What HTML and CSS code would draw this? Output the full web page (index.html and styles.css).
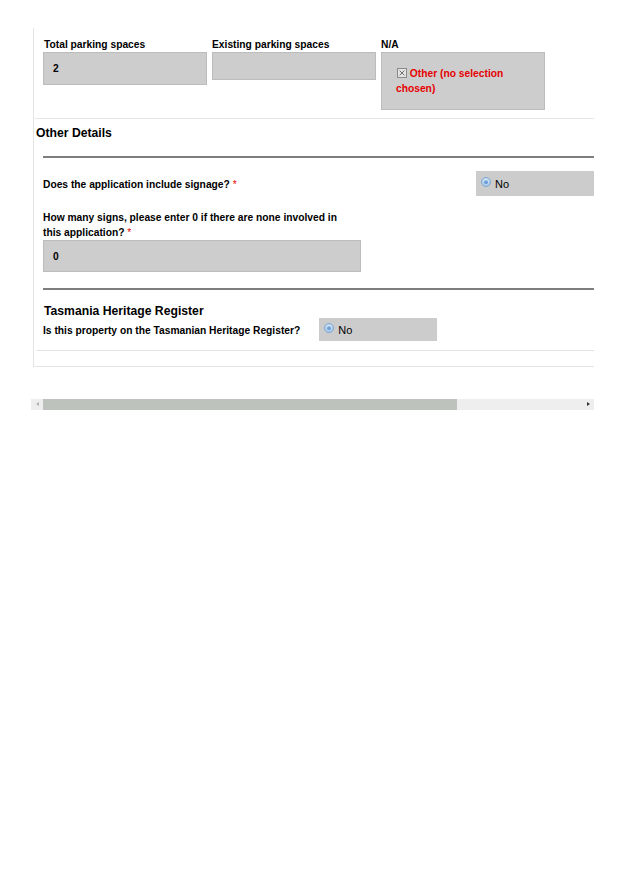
FILE: index.html
```html
<!DOCTYPE html>
<html>
<head>
<meta charset="utf-8">
<link rel="stylesheet" href="styles.css">
</head>
<body>
<div class="scroller">
  <div class="panel">
    <div class="parking-row">
      <div class="field">
        <div class="label">Total parking spaces</div>
        <div class="box box-tall">2</div>
      </div>
      <div class="field">
        <div class="label">Existing parking spaces</div>
        <div class="box box-short"></div>
      </div>
      <div class="field">
        <div class="label">N/A</div>
        <div class="box box-na">
          <span class="na-text"><span class="checkbox"><svg width="10" height="10" viewBox="0 0 10 10"><rect x="0.5" y="0.5" width="9" height="9" fill="#e4e4e4" stroke="#8a8a8a"/><path d="M2.6 2.6 L7.4 7.4 M7.4 2.6 L2.6 7.4" stroke="#6f6f6f" stroke-width="1"/></svg></span> Other (no selection chosen)</span>
        </div>
      </div>
    </div>

    <h2 class="section-title">Other Details</h2>
    <div class="rule-dark"></div>

    <div class="question-row signage">
      <div class="q-label">Does the application include signage? <span class="req">*</span></div>
      <div class="radio-box">
        <span class="radio"><svg width="10" height="10" viewBox="0 0 10 10"><defs><radialGradient id="rg1" cx="50%" cy="40%" r="60%"><stop offset="0" stop-color="#e8f2fc"/><stop offset="1" stop-color="#9cc0e6"/></radialGradient></defs><circle cx="5" cy="5" r="4.5" fill="url(#rg1)" stroke="#7fa7d3"/><circle cx="5" cy="5.3" r="2" fill="#6f9fd6"/></svg></span>No
      </div>
    </div>

    <div class="signs-field">
      <div class="q-label signs-label">How many signs, please enter 0 if there are none involved in this application? <span class="req">*</span></div>
      <div class="box box-signs">0</div>
    </div>

    <div class="rule-dark rule-second"></div>

    <h3 class="sub-title">Tasmania Heritage Register</h3>
    <div class="question-row heritage">
      <div class="q-label">Is this property on the Tasmanian Heritage Register?</div>
      <div class="radio-box radio-box-small">
        <span class="radio"><svg width="10" height="10" viewBox="0 0 10 10"><defs><radialGradient id="rg2" cx="50%" cy="40%" r="60%"><stop offset="0" stop-color="#e8f2fc"/><stop offset="1" stop-color="#9cc0e6"/></radialGradient></defs><circle cx="5" cy="5" r="4.5" fill="url(#rg2)" stroke="#7fa7d3"/><circle cx="5" cy="5.3" r="2" fill="#6f9fd6"/></svg></span>No
      </div>
    </div>
    <div class="rule-light"></div>
  </div>
</div>

<div class="hscroll">
  <div class="arrow-left"></div>
  <div class="thumb"></div>
  <div class="track-rest"></div>
  <div class="arrow-right"></div>
</div>
</body>
</html>
```

FILE: styles.css
```css
html, body {
  margin: 0;
  padding: 0;
  background: #ffffff;
}

body {
  font-family: "Liberation Sans", Arial, sans-serif;
  color: #000;
  padding-top: 28px;
}

.scroller {
  margin-left: 31px;
  width: 563px;
  overflow: hidden;
}

.panel {
  margin-left: 2px;
  border-left: 1px solid #e4e4e4;
  border-bottom: 1px solid #e4e4e4;
  padding-top: 10px;
  padding-bottom: 15px;
}

.parking-row {
  display: flex;
  gap: 6px;
  padding-left: 9px;
  padding-bottom: 8px;
  margin-left: 1px;
  border-bottom: 1px solid #e6e6e6;
}

.parking-row .field {
  width: 163px;
}

.label {
  font-size: 10.25px;
  font-weight: bold;
  line-height: 12px;
  height: 12px;
  margin-top: 1px;
  margin-bottom: 1px;
  margin-left: -1px;
  white-space: nowrap;
}

.parking-row .field:first-child .label {
  margin-left: 0;
}

.box {
  box-sizing: border-box;
  background: #cdcdcd;
  border: 1px solid #bcbcbc;
  font-size: 10.25px;
  font-weight: bold;
  padding-left: 9px;
  display: flex;
  align-items: center;
}

.box-tall {
  height: 33px;
  margin-left: -1px;
}

.box-short {
  height: 28px;
  margin-left: -1px;
}

.box-na {
  height: 58px;
  margin-left: -1px;
  display: block;
  padding: 13px 14px 0 14px;
}

.na-text {
  color: #e60000;
  font-size: 10.25px;
  font-weight: bold;
  line-height: 15px;
  display: block;
}

.checkbox {
  display: inline-block;
  width: 10px;
  height: 10px;
  vertical-align: -1px;
  margin-left: 1px;
}

.checkbox svg {
  display: block;
}

.section-title {
  margin: 7px 0 0 2px;
  font-size: 12.2px;
  font-weight: bold;
  line-height: 14px;
}

.rule-dark {
  margin: 16px 0 0 9px;
  height: 2px;
  background: #7e7e7e;
}

.question-row {
  display: flex;
  align-items: center;
  padding-left: 9px;
}

.question-row .q-label {
  padding-top: 2px;
}

.signage {
  margin-top: 13px;
  justify-content: space-between;
}

.q-label {
  font-size: 10.25px;
  font-weight: bold;
  line-height: 15px;
}

.req {
  color: #e60000;
  font-weight: normal;
  line-height: 10px;
}

.radio-box {
  box-sizing: border-box;
  width: 118px;
  height: 25px;
  background: #cccccc;
  font-size: 11px;
  display: flex;
  align-items: center;
  padding-left: 5px;
  padding-top: 1px;
}

.radio-box-small {
  height: 23px;
}

.radio {
  display: inline-block;
  width: 10px;
  height: 10px;
  margin-right: 4px;
  margin-top: -4px;
}

.radio svg {
  display: block;
}

.signs-field {
  margin-top: 14px;
  padding-left: 9px;
}

.signs-label {
  width: 310px;
}

.box-signs {
  width: 318px;
  height: 32px;
  margin-top: 0;
}

.rule-second {
  margin-top: 16px;
}

.sub-title {
  margin: 14px 0 0 10px;
  font-size: 12.2px;
  font-weight: bold;
  line-height: 14px;
}

.heritage {
  margin-top: 0;
  gap: 19px;
}

.rule-light {
  margin: 9px 0 0 3px;
  height: 1px;
  background: #e2e2e2;
}

.hscroll {
  margin: 32px 0 0 31px;
  width: 563px;
  height: 11px;
  display: flex;
  background: #eeeeee;
}

.arrow-left {
  width: 12px;
  position: relative;
}

.arrow-left::before {
  content: "";
  position: absolute;
  left: 5px;
  top: 3px;
  border-top: 2.5px solid transparent;
  border-bottom: 2.5px solid transparent;
  border-right: 3px solid #b0b0b0;
}

.thumb {
  width: 414px;
  background: #bec2bd;
}

.track-rest {
  flex: 1;
}

.arrow-right {
  width: 12px;
  position: relative;
}

.arrow-right::before {
  content: "";
  position: absolute;
  left: 5px;
  top: 3px;
  border-top: 2.5px solid transparent;
  border-bottom: 2.5px solid transparent;
  border-left: 3px solid #333;
}
```
